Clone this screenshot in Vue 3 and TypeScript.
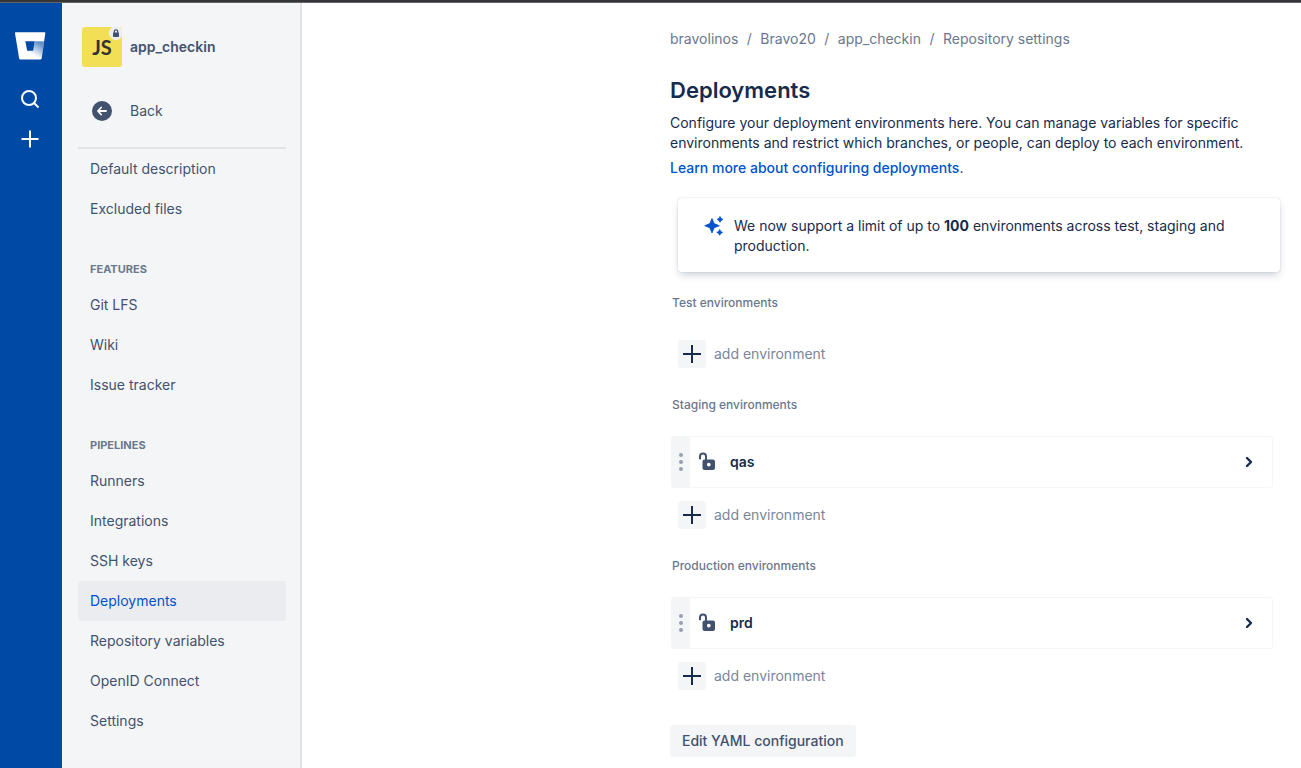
<script setup lang="ts">
interface NavGroup {
  title: string
  items: string[]
}

interface EnvironmentGroup {
  title: string
  environments: string[]
}

const navGroups: NavGroup[] = [
  { title: '', items: ['Default description', 'Excluded files'] },
  { title: 'Features', items: ['Git LFS', 'Wiki', 'Issue tracker'] },
  {
    title: 'Pipelines',
    items: [
      'Runners',
      'Integrations',
      'SSH keys',
      'Deployments',
      'Repository variables',
      'OpenID Connect',
      'Settings',
    ],
  },
]

const activeItem = 'Deployments'

const breadcrumbs: string[] = ['bravolinos', 'Bravo20', 'app_checkin', 'Repository settings']

const environmentGroups: EnvironmentGroup[] = [
  { title: 'Test environments', environments: [] },
  { title: 'Staging environments', environments: ['qas'] },
  { title: 'Production environments', environments: ['prd'] },
]
</script>

<template>
  <div class="page">
    <div class="topline"></div>
    <div class="shell">
      <nav class="rail" aria-label="Global">
        <a class="logo" href="#" aria-label="Bitbucket">
          <svg width="32" height="30" viewBox="0 0 32 30">
            <defs>
              <linearGradient id="bucket-shade" x1="25" y1="9" x2="16" y2="24" gradientUnits="userSpaceOnUse">
                <stop offset="0.15" stop-color="#0049a5" stop-opacity="0.6" />
                <stop offset="0.9" stop-color="#0049a5" stop-opacity="0" />
              </linearGradient>
            </defs>
            <path
              fill="#fff"
              fill-rule="evenodd"
              d="M1.900 1.200h28.500a.9.9 0 0 1 .9 1.100l-3.600 25a1.200 1.200 0 0 1-1.200 1.100H6.500a1.400 1.400 0 0 1-1.400-1.200L1 2.300a.9.9 0 0 1 .9-1.100zM11.300 10.300l1.900 9.400h6l1.500-9.400z"
            />
            <path
              fill="url(#bucket-shade)"
              d="M20.700 10.300h9.400l-2.400 17a1.200 1.200 0 0 1-1.200 1.100H6.500l6.700-8.700h6z"
            />
          </svg>
        </a>
        <button class="rail-button" aria-label="Search">
          <svg width="24" height="24" viewBox="0 0 24 24" fill="none" stroke="#fff" stroke-width="2">
            <circle cx="11" cy="11" r="7" />
            <path d="M16 16l4.500 4.500" />
          </svg>
        </button>
        <button class="rail-button" aria-label="Create">
          <svg width="24" height="24" viewBox="0 0 24 24" fill="none" stroke="#fff" stroke-width="2">
            <path d="M12 3.500v17M3.500 12h17" />
          </svg>
        </button>
      </nav>

      <aside class="sidebar">
        <div class="project">
          <div class="avatar">
            JS
            <span class="badge">
              <svg width="8" height="8" viewBox="0 0 8 8">
                <path d="M2.300 4V2.600a1.700 1.700 0 0 1 3.400 0V4" fill="none" stroke="#42526e" stroke-width="1.200" />
                <rect x="1" y="3.500" width="6" height="4.500" rx="0.800" fill="#42526e" />
              </svg>
            </span>
          </div>
          <span class="project-name">app_checkin</span>
        </div>
        <a class="back" href="#">
          <svg width="20" height="20" viewBox="0 0 20 20">
            <circle cx="10" cy="10" r="10" fill="#42526e" />
            <path
              d="M9.200 6.500L5.900 10l3.300 3.500M6.200 10H14"
              fill="none"
              stroke="#fff"
              stroke-width="1.800"
              stroke-linecap="round"
              stroke-linejoin="round"
            />
          </svg>
          Back
        </a>
        <nav class="nav" aria-label="Repository settings">
          <section v-for="group in navGroups" :key="group.title">
            <h2 v-if="group.title" class="nav-heading">{{ group.title }}</h2>
            <a
              v-for="item in group.items"
              :key="item"
              href="#"
              class="nav-item"
              :class="{ active: item === activeItem }"
              >{{ item }}</a
            >
          </section>
        </nav>
      </aside>

      <main class="main">
        <div class="content">
          <nav class="breadcrumbs" aria-label="Breadcrumbs">
            <template v-for="(crumb, index) in breadcrumbs" :key="crumb">
              <span v-if="index > 0" class="slash">/</span>
              <a href="#">{{ crumb }}</a>
            </template>
          </nav>

          <h1>Deployments</h1>
          <p class="intro">
            Configure your deployment environments here. You can manage variables for specific
            environments and restrict which branches, or people, can deploy to each environment.
          </p>
          <p class="learn"><a href="#">Learn more about configuring deployments</a>.</p>

          <div class="notice">
            <svg
              width="20"
              height="20"
              viewBox="0 0 20 20"
              fill="#0052cc"
              stroke="#0052cc"
              stroke-width="0.800"
              stroke-linejoin="round"
            >
              <path d="M8 2.500l2.100 5.100 5.200 2.100-5.200 2.100L8 17l-2.100-5.200L.7 9.700l5.200-2.100z" />
              <path d="M16 .5l1 1.900 1.900 1-1.900 1-1 1.900-1-1.900-1.900-1 1.900-1z" />
              <path d="M15.700 13.500l1 1.900 1.900 1-1.900 1-1 1.900-1-1.900-1.900-1 1.900-1z" />
            </svg>
            <p>
              We now support a limit of up to <strong>100</strong> environments across test, staging
              and production.
            </p>
          </div>

          <section v-for="group in environmentGroups" :key="group.title" class="env-group">
            <h2>{{ group.title }}</h2>
            <div v-for="env in group.environments" :key="env" class="env-row">
              <span class="grip">
                <svg width="4" height="18" viewBox="0 0 4 18" fill="#97a0af">
                  <circle cx="2" cy="2" r="2" />
                  <circle cx="2" cy="9" r="2" />
                  <circle cx="2" cy="16" r="2" />
                </svg>
              </span>
              <svg class="lock" width="18" height="20" viewBox="0 0 18 20">
                <path
                  d="M2 7.200V4.400a3 3 0 0 1 6 0V8"
                  fill="none"
                  stroke="#42526e"
                  stroke-width="2"
                />
                <path
                  fill="#42526e"
                  fill-rule="evenodd"
                  d="M6.500 7.500H15a2 2 0 0 1 2 2v6.500a2 2 0 0 1-2 2H6.500a2 2 0 0 1-2-2V9.500a2 2 0 0 1 2-2zm4.300 3.200a1.900 1.900 0 1 0 0 3.800 1.900 1.900 0 0 0 0-3.800z"
                />
              </svg>
              <span class="env-name">{{ env }}</span>
              <button class="expand" :aria-label="`Expand ${env}`">
                <svg width="10" height="12" viewBox="0 0 10 12">
                  <path
                    d="M3 2l4 4-4 4"
                    fill="none"
                    stroke="#172b4d"
                    stroke-width="2.400"
                    stroke-linecap="round"
                    stroke-linejoin="round"
                  />
                </svg>
              </button>
            </div>
            <button class="add">
              <span class="add-icon">
                <svg width="18" height="18" viewBox="0 0 18 18">
                  <path d="M9 0v18M0 9h18" stroke="#172b4d" stroke-width="2" />
                </svg>
              </span>
              add environment
            </button>
          </section>

          <button class="edit">Edit YAML configuration</button>
        </div>
      </main>
    </div>
  </div>
</template>

<style>
body {
  margin: 0;
  background: #fff;
}
</style>

<style scoped>
.page {
  min-height: 100vh;
  display: flex;
  flex-direction: column;
  font-family: Inter, 'Liberation Sans', sans-serif;
  font-size: 14px;
  line-height: 20px;
  color: #172b4d;
}
a {
  color: inherit;
  text-decoration: none;
}
h1,
h2,
p {
  margin: 0;
}
button {
  padding: 0;
  border: 0;
  background: none;
  font: inherit;
  color: inherit;
  cursor: pointer;
}
svg {
  display: block;
  flex: none;
}
.topline {
  height: 2px;
  background: #353539;
  border-bottom: 1px solid #66666a;
}
.shell {
  flex: 1;
  display: flex;
}
.rail {
  flex: none;
  box-sizing: border-box;
  width: 62px;
  padding: 28px 2px 0 0;
  background: #0049a5;
  display: flex;
  flex-direction: column;
  align-items: center;
}
.logo {
  margin-bottom: 18px;
}
.rail-button {
  width: 40px;
  height: 40px;
  display: grid;
  place-items: center;
}
.sidebar {
  flex: none;
  box-sizing: border-box;
  width: 240px;
  padding: 24px 14px 16px 16px;
  background: #f4f5f7;
  border-right: 2px solid #dfe1e5;
  color: #42526e;
}
.project {
  display: flex;
  align-items: center;
  gap: 8px;
  padding-left: 4px;
}
.avatar {
  position: relative;
  width: 40px;
  height: 40px;
  border-radius: 3px;
  background: #f3df56;
  color: #32322c;
  font: 700 20px/40px Lato, sans-serif;
  text-align: center;
}
.badge {
  position: absolute;
  top: -1px;
  right: -1px;
  width: 12px;
  height: 12px;
  border: 1px solid #f4f5f7;
  border-radius: 50%;
  background: #ebecf0;
  display: grid;
  place-items: center;
}
.project-name {
  font-weight: 600;
}
.back {
  display: flex;
  align-items: center;
  gap: 18px;
  height: 40px;
  margin: 24px 0 16px;
  padding-left: 14px;
}
.nav {
  border-top: 2px solid #e2e3e6;
}
.nav-heading {
  padding: 32px 12px 8px;
  font-size: 11px;
  line-height: 16px;
  font-weight: 700;
  text-transform: uppercase;
  color: #6b778c;
}
.nav-item {
  display: block;
  padding: 10px 12px;
  border-radius: 3px;
}
.nav-item.active {
  background: #ebecf0;
  color: #0052cc;
}
.main {
  flex: 1;
  min-width: 0;
  display: flex;
  justify-content: flex-end;
  padding: 26px 20px 11px;
}
.content {
  flex: 0 1 611px;
  min-width: 0;
}
.breadcrumbs {
  display: flex;
  color: #6b778c;
}
.slash {
  width: 22px;
  text-align: center;
}
h1 {
  margin-top: 27px;
  font-size: 22px;
  line-height: 28px;
  font-weight: 600;
}
.intro {
  margin-top: 9px;
}
.learn {
  margin-top: 5px;
}
.learn a {
  color: #0052cc;
  font-weight: 500;
}
.notice {
  display: flex;
  gap: 10px;
  margin: 20px 1px 21px 8px;
  padding: 18px 40px 16px 26px;
  border-radius: 3px;
  box-shadow:
    0 4px 8px -2px rgba(9, 30, 66, 0.25),
    0 0 1px rgba(9, 30, 66, 0.31);
}
.env-group {
  margin: 0 8px 27px 1px;
}
.env-group h2 {
  padding: 0 1px;
  margin-bottom: 21px;
  font-size: 12px;
  line-height: 20px;
  font-weight: 500;
  color: #6b778c;
}
.env-row {
  display: flex;
  align-items: center;
  height: 50px;
  border: 1px solid #f4f5f7;
  border-radius: 3px;
}
.grip {
  align-self: stretch;
  width: 18px;
  background: #f4f5f7;
  display: grid;
  place-items: center;
}
.lock {
  margin: 0 14px 0 8px;
}
.env-name {
  flex: 1;
  font-weight: 600;
}
.expand {
  width: 24px;
  height: 24px;
  margin-right: 11px;
  display: grid;
  place-items: center;
}
.add {
  display: flex;
  align-items: center;
  gap: 8px;
  margin: 13px 0 0 7px;
  color: #7a869a;
}
.env-group h2 + .add {
  margin-top: 27px;
}
.add-icon {
  width: 28px;
  height: 28px;
  border-radius: 3px;
  background: #f4f5f7;
  display: grid;
  place-items: center;
}
.edit {
  height: 32px;
  margin-top: 8px;
  padding: 0 12px;
  border-radius: 3px;
  background: #f4f5f7;
  color: #42526e;
  font-weight: 500;
}
</style>
